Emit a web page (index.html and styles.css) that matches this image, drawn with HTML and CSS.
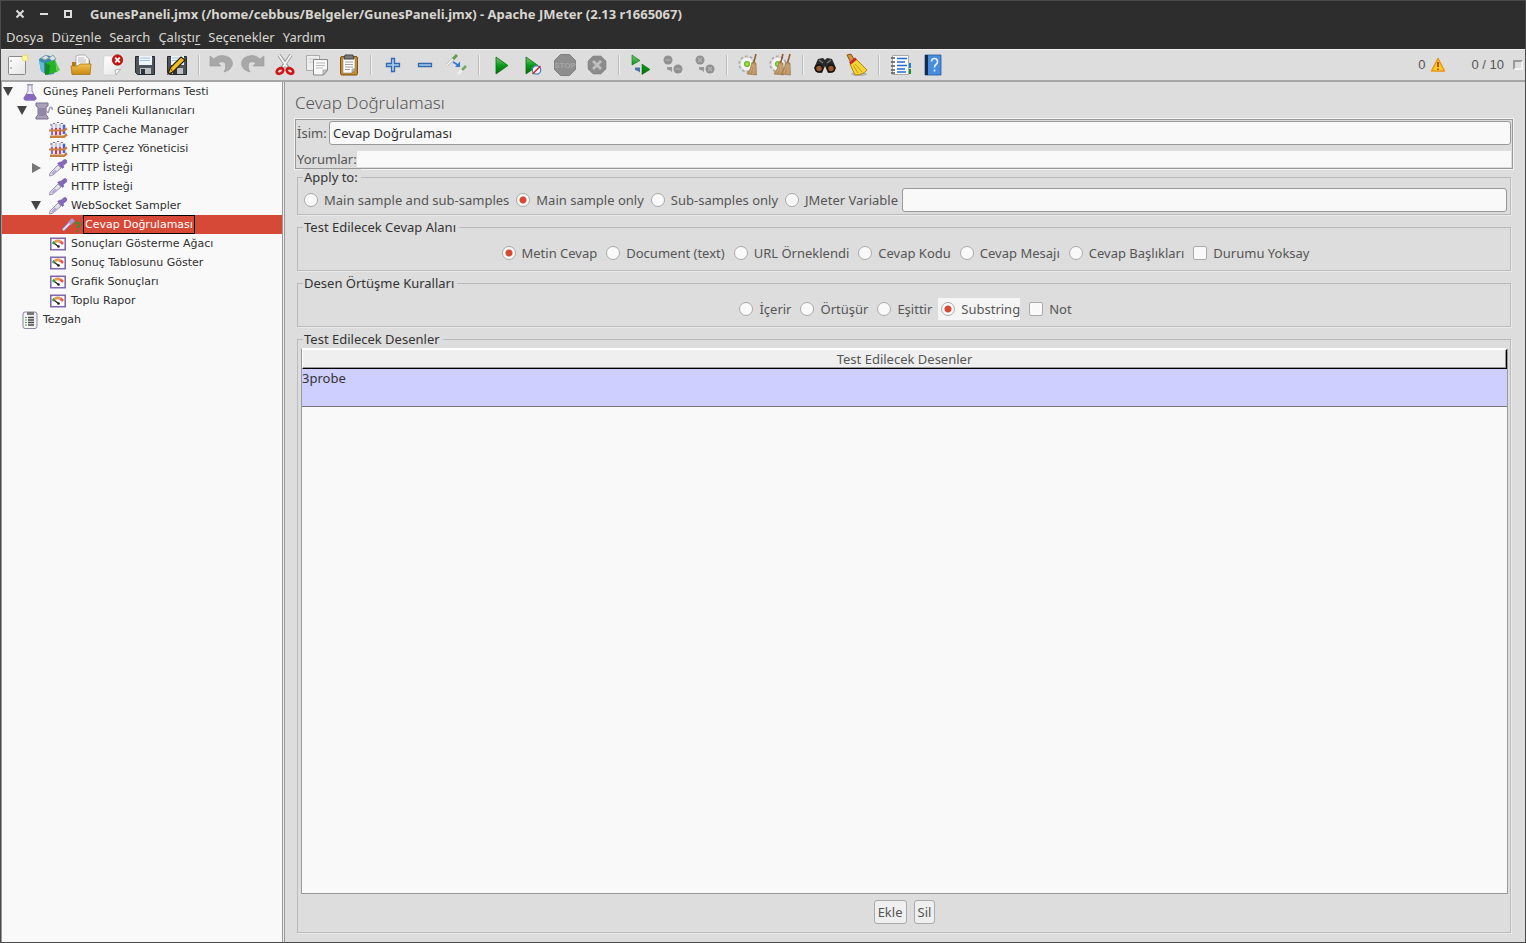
FILE: index.html
```html
<!DOCTYPE html>
<html lang="tr">
<head>
<meta charset="utf-8">
<title>GunesPaneli.jmx - Apache JMeter</title>
<link rel="stylesheet" href="styles.css">
</head>
<body>
<svg class="defs" aria-hidden="true">
  <defs>
    <linearGradient id="green" x1="0" y1="0" x2="0" y2="1"><stop offset="0" stop-color="#7cc47c"/><stop offset=".5" stop-color="#0a9a1a"/><stop offset="1" stop-color="#046804"/></linearGradient>
    <linearGradient id="gold" x1="0" y1="0" x2="0" y2="1"><stop offset="0" stop-color="#f0c050"/><stop offset="1" stop-color="#c88a10"/></linearGradient>
    <linearGradient id="paper" x1="0" y1="0" x2="1" y2="1"><stop offset="0" stop-color="#fff"/><stop offset="1" stop-color="#e4e4e4"/></linearGradient>
    <radialGradient id="glow"><stop offset="0" stop-color="#b8f060"/><stop offset="1" stop-color="#5cae1c"/></radialGradient>
  </defs>
  <symbol id="i-vial" viewBox="0 0 20 18">
    <path d="M1.500 17l.5-3 8-8 3 3-8 7z" fill="#e4e2ec" stroke="#9a96b0"/>
    <path d="M3 14.500l4-4 2 1.500-4 3.500z" fill="#b9a5dc"/>
    <path d="M9.500 4.500l5 5 1.500-1.500-1-1.500L18.500 4q1-3-1-3.500-2-.5-4 2.500l-2 .3z" fill="#8468ba" stroke="#6f55a5" stroke-width=".6"/>
  </symbol>
  <symbol id="i-rack" viewBox="0 0 20 18">
    <path d="M4 3v11M8 2.500v12M12 2.500v12M16 3v10" stroke="#c9c6d6" stroke-width="2.600"/>
    <path d="M4 7v7" stroke="#8a6cc0" stroke-width="2"/><path d="M8 7v7" stroke="#d2344a" stroke-width="2"/><path d="M12 7v7" stroke="#d03c78" stroke-width="2"/><path d="M16 4v9" stroke="#4562dc" stroke-width="2.400"/>
    <path d="M5 2.500h2M9 1.500h2M13 2.500h2M2 4h2" stroke="#777390" stroke-width="1.200"/>
    <path d="M1 9.500h15l3-2" fill="none" stroke="#c7803e" stroke-width="2.200"/><path d="M2 15.800h14l3-2.500" fill="none" stroke="#c7803e" stroke-width="2.600"/>
  </symbol>
  <symbol id="i-chart" viewBox="0 0 20 18">
    <rect x="2.800" y="3.300" width="14.400" height="11.400" fill="#fff" stroke="#8069ad" stroke-width="1.600"/>
    <path d="M5 9l1.500-2.500" stroke="#38a048" stroke-width="2.500"/><path d="M7 6.800q3-1.800 5.500 0" fill="none" stroke="#e89850" stroke-width="2.800"/><path d="M12.500 6.500l2.500 2.500" stroke="#e45a50" stroke-width="2.600"/>
    <path d="M6.500 8.500l4 3" stroke="#222" stroke-width="1.300"/><circle cx="10.500" cy="11.500" r="1.300" fill="#222"/>
  </symbol>
  <symbol id="i-run" viewBox="0 0 24 24"><path d="M7 4l12 8.500L7 21z" fill="url(#green)" stroke="#087010" stroke-width=".8"/></symbol>
  <symbol id="i-broom" viewBox="0 0 10 24"><path d="M9 1L6 12" stroke="#93602d" stroke-width="1.600"/><path d="M5 9l4 1 .5 12L0 21q4-5 5-12z" fill="#b68d5e" stroke="#94703f" stroke-width=".6"/><path d="M6 11l-3 9M7 11l-1 10M8 12v9" stroke="#dcb98c" stroke-width=".6"/></symbol>
  <symbol id="i-gear" viewBox="0 0 18 18"><circle cx="9" cy="9" r="7.300" fill="none" stroke="#a8a8a8" stroke-width="2.600" stroke-dasharray="2.600 2"/><circle cx="9" cy="9" r="6.800" fill="#f4f4f4" stroke="#d0d0d0" stroke-width=".8"/><circle cx="9" cy="9" r="3" fill="url(#glow)"/></symbol>
  <symbol id="i-disk" viewBox="0 0 24 24"><path d="M2.500 3.500h19v18h-17l-2-2z" fill="#4e545c" stroke="#25282d"/><path d="M6 3h13v9H6z" fill="#edf4fa"/><path d="M7 5h10M7 7.500h10" stroke="#a6c2dc"/><path d="M7 15h11v6H7z" fill="#bcc0c3"/><path d="M8 16h4v5H8z" fill="#30343a"/></symbol>
</svg>
<div class="window">
  <header class="titlebar">
    <div class="window-controls">
      <button type="button" aria-label="Kapat"><svg viewBox="0 0 10 10"><path d="M1.500 1.500l7 7M8.500 1.500l-7 7"/></svg></button>
      <button type="button" aria-label="Küçült"><svg viewBox="0 0 10 10"><path d="M1 5h8"/></svg></button>
      <button type="button" aria-label="Büyüt"><svg viewBox="0 0 10 10"><path d="M2 2h6v6H2z"/></svg></button>
    </div>
    <h1>GunesPaneli.jmx (/home/cebbus/Belgeler/GunesPaneli.jmx) - Apache JMeter (2.13 r1665067)</h1>
  </header>
  <nav class="menubar">
    <button type="button">Dosya</button><button type="button">Düz<u>e</u>nle</button><button type="button">Search</button><button type="button">Çalıştı<u>r</u></button><button type="button">Seçenekler</button><button type="button">Yardım</button>
  </nav>
  <div class="toolbar">
    <button type="button" aria-label="Yeni"><svg viewBox="0 0 24 24"><rect x="3.500" y="3.500" width="17" height="18" rx="1" fill="url(#paper)" stroke="#8a8a8a"/><path d="M6 7v2M6 14v2" stroke="#888"/><circle cx="20" cy="5" r="3" fill="#fff6a0" stroke="#eedc60"/></svg></button>
    <button type="button" aria-label="Şablonlar"><svg viewBox="0 0 24 24"><path d="M2 6l7-4 8 2 2 6-2 11-7 1-6-4z" fill="#3687b6"/><path d="M4 5l5-3 3 3-4 2zM12 5l4-3 3 4-4 2z" fill="#d8e2e4" stroke="#8aa0a8"/><path d="M8 10l10-3 2 12-12 3z" fill="#25b428"/><path d="M8 10l5 2-1 9-4 1z" fill="#168a1c"/><path d="M18 7l5 10-3 2z" fill="#5ecf4c"/><path d="M2 8l5 2v10l-3-2z" fill="#62b9df"/></svg></button>
    <button type="button" aria-label="Aç"><svg viewBox="0 0 24 24"><path d="M3 9h5l2-2h11v14H3z" fill="#b17a18"/><path d="M7 13V3l3-1h6l4 4v8z" fill="#f8f8f8" stroke="#999" stroke-width=".7"/><path d="M9 5h6M9 7h8M9 9h8" stroke="#bbb"/><path d="M2 13h7l2-2h11l-1 10.500H3z" fill="url(#gold)" stroke="#ac7410" stroke-width=".8"/></svg></button>
    <button type="button" aria-label="Kapat"><svg viewBox="0 0 24 24"><path d="M3 3h17v14l-5 5H2z" fill="url(#paper)" stroke="#ccc" stroke-width=".6"/><path d="M19.500 16L14 17l1 5z" fill="#fff" stroke="#999" stroke-width=".7"/><circle cx="16.500" cy="7" r="5.200" fill="#c9170f" stroke="#91100c" stroke-width=".7"/><path d="M14.200 4.700l4.600 4.600M18.800 4.700l-4.600 4.600" stroke="#fff" stroke-width="1.800"/></svg></button>
    <button type="button" aria-label="Kaydet"><svg viewBox="0 0 24 24"><use href="#i-disk"/></svg></button>
    <button type="button" aria-label="Farklı kaydet"><svg viewBox="0 0 24 24"><use href="#i-disk"/><path d="M3 21l2-6L16 4l4 3L8 19z" fill="#f4bd20" stroke="#2e2410" stroke-width="1.300"/><path d="M5 15l3 4" stroke="#5c3d0c"/></svg></button>
    <span class="separator"></span>
    <button type="button" aria-label="Geri al"><svg viewBox="0 0 24 24"><path id="undo" d="M1 3v10h11L9 10q6-3 7.500 1 1 4-1.500 8 8-2 8.500-8.500Q23 3 13 2.500 8 2.500 5 6z" fill="#a8a8a8" stroke="#989898" stroke-width=".6"/></svg></button>
    <button type="button" aria-label="Yinele"><svg viewBox="0 0 24 24"><use href="#undo" transform="matrix(-1 0 0 1 24 0)"/></svg></button>
    <button type="button" aria-label="Kes"><svg viewBox="0 0 24 24"><path d="M6 2l9 13M18 2L9 15" stroke="#8c8c8c" stroke-width="3.400"/><path d="M6 2l8 12M18 2l-8 12" stroke="#f4f4f4" stroke-width="2"/><ellipse cx="7" cy="18" rx="3.500" ry="2.500" fill="none" stroke="#cf1515" stroke-width="2.700" transform="rotate(-30 7 18)"/><ellipse cx="17" cy="18" rx="3.500" ry="2.500" fill="none" stroke="#cf1515" stroke-width="2.700" transform="rotate(30 17 18)"/></svg></button>
    <button type="button" aria-label="Kopyala"><svg viewBox="0 0 24 24"><path d="M1.500 2.500h13v15h-13z" fill="#eee" stroke="#aaa"/><path d="M4 6h8M4 9h8" stroke="#ccc"/><path d="M8.500 6.500h14v11l-4 4.500h-10z" fill="#f8f8f8" stroke="#888"/><path d="M11 10h9M11 12.500h9M11 15h7" stroke="#bbb"/><path d="M22 17h-4v5z" fill="#ccc" stroke="#888" stroke-width=".6"/></svg></button>
    <button type="button" aria-label="Yapıştır"><svg viewBox="0 0 24 24"><rect x="3.500" y="3.500" width="17" height="18.500" rx="1.500" fill="#c68a2c" stroke="#7d5010"/><path d="M6 5h12v12l-3 3H6z" fill="#fbfbfb" stroke="#888" stroke-width=".6"/><path d="M8 2h8l1 4H7z" fill="#777a78" stroke="#444"/><path d="M8 9h8M8 11.500h8M8 14h8M8 16.500h5" stroke="#a3a3a3"/><path d="M18 16h-3v4z" fill="#ccc" stroke="#777" stroke-width=".6"/></svg></button>
    <span class="separator"></span>
    <button type="button" aria-label="Genişlet"><svg viewBox="0 0 24 24"><path d="M10.500 5.500h3v5h5v3h-5v5h-3v-5h-5v-3h5z" fill="#a9cdf0" stroke="#3268b0" stroke-width="1.300"/></svg></button>
    <button type="button" aria-label="Daralt"><svg viewBox="0 0 24 24"><path d="M5.500 10.500h13v3h-13z" fill="#a9cdf0" stroke="#3268b0" stroke-width="1.300"/></svg></button>
    <button type="button" aria-label="Değiştir"><svg viewBox="0 0 24 24"><path d="M2 12l7-7" stroke="#bbb" stroke-width="3"/><path d="M2 12l7-7" stroke="#f5f5f5" stroke-width="1.500"/><path d="M8 6l4-4" stroke="#5e9e4c" stroke-width="3"/><path d="M13 21l5-5" stroke="#eee" stroke-width="3"/><path d="M17 17l4-4" stroke="#76a565" stroke-width="2.500"/><path d="M8 9l5 3" stroke="#3078d0" stroke-width="1.500"/><path d="M15 8.500v5.500H10z" fill="#3078d0"/></svg></button>
    <span class="separator"></span>
    <button type="button" aria-label="Başlat"><svg viewBox="0 0 24 24"><use href="#i-run"/></svg></button>
    <button type="button" aria-label="Beklemeden başlat"><svg viewBox="0 0 24 24"><use href="#i-run" x="-2"/><circle cx="15.500" cy="17" r="4.200" fill="#f4f4ff" stroke="#5080c0" stroke-width="1.300"/><path d="M11.500 21l8-8" stroke="#d12222" stroke-width="1.500"/></svg></button>
    <button type="button" aria-label="Durdur" disabled><svg viewBox="0 0 24 24"><path d="M7.500 1.500h9l6 6v9l-6 6h-9l-6-6v-9z" fill="#8e8e8e" stroke="#7f7f7f"/><text x="12" y="15" class="stop-text">STOP</text></svg></button>
    <button type="button" aria-label="Kapat" disabled><svg viewBox="0 0 24 24"><path d="M8 3h8l5 5v8l-5 5H8l-5-5V8z" fill="#8b8b8b" stroke="#858585" stroke-width=".6"/><path d="M8 8l8 8M16 8l-8 8" stroke="#c0c0c0" stroke-width="2.800"/></svg></button>
    <span class="separator"></span>
    <button type="button" aria-label="Uzaktan başlat"><svg viewBox="0 0 24 24"><path d="M3 2l8 5.500L3 12zM13 11l8 5.500-8 5z" fill="url(#green)" stroke="#087010" stroke-width=".6"/><path d="M6 14.500h5v5l-2-1.500-3-1z" fill="#496fa8"/></svg></button>
    <button type="button" aria-label="Uzaktan durdur" disabled><svg viewBox="0 0 24 24"><circle cx="7" cy="7" r="4.500" fill="#919191"/><circle cx="17" cy="16" r="4.500" fill="#919191"/><path d="M4.500 7h5M14.500 16h5" stroke="#aaa" stroke-width="1.500"/><path d="M6 14h5v5l-2-1.500-3-1z" fill="#999"/></svg></button>
    <button type="button" aria-label="Uzaktan kapat" disabled><svg viewBox="0 0 24 24"><circle cx="7" cy="7" r="4.500" fill="#919191"/><circle cx="17" cy="16" r="4.500" fill="#919191"/><path d="M5 5l4 4M9 5L5 9M15 14l4 4M19 14l-4 4" stroke="#b4b4b4" stroke-width="1.300"/><path d="M6 14h5v5l-2-1.500-3-1z" fill="#999"/></svg></button>
    <span class="separator"></span>
    <button type="button" aria-label="Temizle"><svg viewBox="0 0 24 24"><use href="#i-gear" x="1" y="2" width="18" height="18"/><use href="#i-broom" x="9" y="0" width="12" height="24"/></svg></button>
    <button type="button" aria-label="Hepsini temizle"><svg viewBox="0 0 24 24"><use href="#i-gear" x="0" y="2" width="18" height="18"/><use href="#i-broom" x="4" y="0" width="12" height="24"/><use href="#i-broom" x="11" y="0" width="12" height="24"/></svg></button>
    <span class="separator"></span>
    <button type="button" aria-label="Ara"><svg viewBox="0 0 24 24"><path d="M5 6l5-1 2 2 2-2 5 1 4 9-2 4-6 1-3-7-3 7-6-1-2-4z" fill="#292929"/><path d="M6 7l4 3M18 7l-4 3" stroke="#777" stroke-width="1.500"/><circle cx="6" cy="15.500" r="3.500" fill="#9c5628" stroke="#111" stroke-width="1.500"/><circle cx="18" cy="15.500" r="3.500" fill="#9c5628" stroke="#111" stroke-width="1.500"/></svg></button>
    <button type="button" aria-label="Aramayı sıfırla"><svg viewBox="0 0 24 24"><ellipse cx="14" cy="21" rx="8" ry="2" fill="#b5b5b5"/><path d="M2 2l4-1 4 7-4 2z" fill="#d69236" stroke="#875615"/><path d="M5 11l6-5 11 11q-4 5-12 5z" fill="#f5d434" stroke="#af870f"/><path d="M8 12l5 8M10 11l7 8" stroke="#c99a15"/><path d="M5 10.500l6-5" stroke="#c72424" stroke-width="2.800"/></svg></button>
    <span class="separator"></span>
    <button type="button" aria-label="Fonksiyon yardımcısı"><svg viewBox="0 0 24 24"><path d="M19 10h3v5h-3z" fill="#197de0"/><path d="M19 16h3v5h-3z" fill="#179324"/><path d="M3.500 2.500h16v19h-16z" fill="#fdfdfd" stroke="#aaa"/><path d="M8 5.500h10M8 9h8M8 12.500h10M8 16h8M8 19h9" stroke="#236ad0" stroke-width="1.300"/><path d="M2 5h4M2 9h4M2 13h4M2 17h4M2 20h4" stroke="#555" stroke-width="1.300"/></svg></button>
    <button type="button" aria-label="Yardım"><svg viewBox="0 0 24 24"><path d="M4 2h16v20H4z" fill="#498cdd" stroke="#265b9b" stroke-width=".8"/><path d="M4 2h3v20H4z" fill="#182c49"/><path d="M10.500 8.500q0-3 3-3t3 3q0 2-1.500 3-1.500 1-1.500 3M13.500 16.500v2" fill="none" stroke="#e8f0ff" stroke-width="1.600"/></svg></button>
    <div class="status">
      <span>0</span>
      <svg class="warning" viewBox="0 0 16 16" aria-hidden="true"><path d="M8 1.500l6.500 12.500h-13z" fill="#ffcd25" stroke="#e79415" stroke-width="1.500" stroke-linejoin="round"/><path d="M8 5v5M8 11.500v1.500" stroke="#a9380c" stroke-width="1.600"/></svg>
      <span class="threads">0 / 10</span>
      <span class="indicator"></span>
    </div>
  </div>
  <div class="workspace">
    <aside class="tree">
      <div class="node"><span class="arrow open"></span><svg viewBox="0 0 20 18"><path d="M8 2h4v6l4 7q0 2-2 2H6q-2 0-2-2l4-7z" fill="#eceaf4" stroke="#9690a8"/><path d="M6.500 11h7l3 4q0 2.500-2 2.500h-9q-2 0-2-2.500z" fill="#8868bc"/><path d="M7 1.500h6" stroke="#99a"/></svg><span class="label">Güneş Paneli Performans Testi</span></div>
      <div class="node level-1"><span class="arrow open"></span><svg viewBox="0 0 20 18"><path d="M2 1h12v3l-2 1v8l2 2v2H2v-2l2-2V5L2 4z" fill="#a9a0ba" stroke="#7a7190"/><path d="M5 7h6M5 9h6M5 11h6M5 13h6" stroke="#786d94"/><path d="M12 8q2 5 3 0 1-4 3-2l.5 2" fill="none" stroke="#a098b2" stroke-width="1.400"/></svg><span class="label">Güneş Paneli Kullanıcıları</span></div>
      <div class="node level-2"><span class="arrow"></span><svg><use href="#i-rack"/></svg><span class="label">HTTP Cache Manager</span></div>
      <div class="node level-2"><span class="arrow"></span><svg><use href="#i-rack"/></svg><span class="label">HTTP Çerez Yöneticisi</span></div>
      <div class="node level-2"><span class="arrow closed"></span><svg><use href="#i-vial"/></svg><span class="label">HTTP İsteği</span></div>
      <div class="node level-2"><span class="arrow"></span><svg><use href="#i-vial"/></svg><span class="label">HTTP İsteği</span></div>
      <div class="node level-2"><span class="arrow open"></span><svg><use href="#i-vial"/></svg><span class="label">WebSocket Sampler</span></div>
      <div class="node level-3 selected"><span class="arrow"></span><svg viewBox="0 0 20 18"><path d="M1 14l7-7" stroke="#8d78b5" stroke-width="3.600"/><path d="M1 14l7-7" stroke="#e6e0ef" stroke-width="1.800"/><path d="M7.500 7.500l4-4" stroke="#a99acb" stroke-width="4"/><path d="M13 8.500q.5-2 2.500-2t2 2-2 2.500v1.500M15.500 14v2" fill="none" stroke="#438c38" stroke-width="2"/></svg><span class="label">Cevap Doğrulaması</span></div>
      <div class="node level-2"><span class="arrow"></span><svg><use href="#i-chart"/></svg><span class="label">Sonuçları Gösterme Ağacı</span></div>
      <div class="node level-2"><span class="arrow"></span><svg><use href="#i-chart"/></svg><span class="label">Sonuç Tablosunu Göster</span></div>
      <div class="node level-2"><span class="arrow"></span><svg><use href="#i-chart"/></svg><span class="label">Grafik Sonuçları</span></div>
      <div class="node level-2"><span class="arrow"></span><svg><use href="#i-chart"/></svg><span class="label">Toplu Rapor</span></div>
      <div class="node"><span class="arrow"></span><svg viewBox="0 0 20 18"><rect x="3" y="1" width="14" height="16.500" rx="2" fill="#f4f4f4" stroke="#8d86a2"/><path d="M7 1h7v3H7z" fill="#777"/><path d="M8 6.500h6M8 9h6M8 11.500h6M8 14h6" stroke="#444" stroke-width="1.300"/><path d="M5 6.500h2M5 9h2M5 11.500h2M5 14h2" stroke="#5a9a5a"/></svg><span class="label">Tezgah</span></div>
    </aside>
    <div class="splitter"></div>
    <main class="editor">
      <h2>Cevap Doğrulaması</h2>
      <div class="naming">
        <div class="name-row"><label for="name">İsim:</label><input id="name" class="field" type="text" value="Cevap Doğrulaması"></div>
        <div class="comment-row"><label for="comments">Yorumlar:</label><input id="comments" type="text"></div>
      </div>
      <fieldset>
        <legend>Apply to:</legend>
        <div class="options scope">
          <label><input type="radio" name="scope">Main sample and sub-samples</label>
          <label><input type="radio" name="scope" checked>Main sample only</label>
          <label><input type="radio" name="scope">Sub-samples only</label>
          <label><input type="radio" name="scope">JMeter Variable</label>
          <input class="field" type="text" aria-label="JMeter Variable">
        </div>
      </fieldset>
      <fieldset>
        <legend>Test Edilecek Cevap Alanı</legend>
        <div class="options centered">
          <label><input type="radio" name="target" checked>Metin Cevap</label>
          <label><input type="radio" name="target">Document (text)</label>
          <label><input type="radio" name="target">URL Örneklendi</label>
          <label><input type="radio" name="target">Cevap Kodu</label>
          <label><input type="radio" name="target">Cevap Mesajı</label>
          <label><input type="radio" name="target">Cevap Başlıkları</label>
          <label><input type="checkbox">Durumu Yoksay</label>
        </div>
      </fieldset>
      <fieldset>
        <legend>Desen Örtüşme Kuralları</legend>
        <div class="options centered">
          <label><input type="radio" name="rule">İçerir</label>
          <label><input type="radio" name="rule">Örtüşür</label>
          <label><input type="radio" name="rule">Eşittir</label>
          <label class="hover"><input type="radio" name="rule" checked>Substring</label>
          <label><input type="checkbox">Not</label>
        </div>
      </fieldset>
      <fieldset class="patterns">
        <legend>Test Edilecek Desenler</legend>
        <div class="pattern-view">
          <table>
            <thead><tr><th>Test Edilecek Desenler</th></tr></thead>
            <tbody><tr><td>3probe</td></tr></tbody>
          </table>
        </div>
        <div class="actions"><button type="button">Ekle</button><button type="button">Sil</button></div>
      </fieldset>
    </main>
  </div>
</div>
</body>
</html>
```
FILE: styles.css
```css
* { box-sizing: border-box; }
body {
  margin: 0;
  font: 13px/16px "Noto Sans", "Open Sans", sans-serif;
  color: #555;
}
button, input { font: inherit; color: inherit; margin: 0; }
button { padding: 0; border: 0; background: none; }
.defs { position: absolute; width: 0; height: 0; }

.window {
  display: flex;
  flex-direction: column;
  height: 100vh;
  border: 1px solid #4a4a4a;
  border-top: 0;
  background: #ddd;
}
.titlebar {
  display: flex;
  align-items: center;
  height: 27px;
  padding-left: 14px;
  gap: 17px;
  border-top: 1px solid #4a4a4a;
  background: #2d2d2d;
  color: #d8d6d0;
}
.window-controls { display: flex; gap: 14px; }
.window-controls button { display: flex; }
.window-controls svg { width: 10px; height: 10px; fill: none; stroke: #dedede; stroke-width: 2; }
.titlebar h1 { margin: 0; font-size: 13px; font-weight: 700; white-space: nowrap; }
.menubar {
  display: flex;
  height: 22px;
  gap: 8px;
  padding: 0 0 2px 5px;
  background: #2d2d2d;
  color: #d8d6d0;
}
.menubar button { white-space: nowrap; }
.menubar u { text-underline-offset: 2px; }

.toolbar {
  display: flex;
  align-items: center;
  height: 33px;
  border-bottom: 2px solid #a6a6a6;
  border-top: 1px solid #f0f0f0;
}
.toolbar button { display: flex; justify-content: center; flex: none; width: 32px; }
.toolbar button svg { width: 24px; height: 24px; }
.separator { flex: none; width: 12px; height: 20px; background: linear-gradient(90deg, #bbb 50%, #f2f2f2 50%) center / 2px 100% no-repeat; }
.stop-text { font: bold 8px "Liberation Sans", sans-serif; fill: #a6a6a6; text-anchor: middle; }
.status {
  display: flex;
  align-items: center;
  margin-left: auto;
  padding-right: 2px;
  gap: 5px;
  font: 13px/16px "Liberation Sans", sans-serif;
}
.warning { width: 16px; height: 16px; }
.threads { margin-left: 20px; }
.indicator { flex: none; width: 10px; height: 10px; margin-left: 4px; border: 2px solid #999; border-right-color: #f4f4f4; border-bottom-color: #f4f4f4; }

.workspace { display: flex; flex: 1; min-height: 0; }
.tree {
  flex: none;
  width: 282px;
  border-left: 1px solid #999;
  border-right: 1px solid #999;
  background: #f9f9f9;
  font: 11px/17px "DejaVu Sans", sans-serif;
  color: #303030;
}
.node { display: flex; align-items: center; height: 19px; }
.level-1 { padding-left: 14px; }
.level-2 { padding-left: 28px; }
.level-3 { padding-left: 42px; }
.node svg { width: 20px; height: 18px; margin-left: 6px; }
.label { margin-left: 1px; padding: 0 1px; border: 1px solid transparent; white-space: nowrap; }
.arrow { display: flex; justify-content: center; width: 12px; }
.arrow.open::before { content: ""; border: 5px solid transparent; border-top: 9px solid #444; border-bottom: 0; }
.arrow.closed::before { content: ""; border: 5px solid transparent; border-left: 9px solid #777; border-right: 0; }
.selected { background: #d64937; color: #fff; }
.selected .label { border-color: #000; }
.splitter { flex: none; width: 2px; border-right: 1px solid #999; background: #eee; }

.editor {
  display: flex;
  flex: 1;
  flex-direction: column;
  min-width: 0;
  padding: 9px 12px 9px 10px;
}
.editor h2 { margin: 0 0 4px; font-size: 17px; line-height: 24px; font-weight: 300; }
.naming { border: 1px solid #999; outline: 1px solid #f5f5f5; padding: 1px; }
.name-row { display: flex; align-items: center; }
.name-row label { width: 32px; }
.field {
  flex: 1;
  min-width: 0;
  height: 24px;
  padding: 0 3px;
  border: 1px solid #999;
  border-radius: 3px;
  background: #f9f9f9;
  color: #333;
}
.comment-row { display: flex; margin-top: 6px; }
.comment-row input { flex: 1; min-width: 0; height: 16px; padding: 0; border: 0; background: #f9f9f9; }
fieldset {
  min-width: 0;
  margin: 0 2px 4px;
  padding: 0 3px;
  border: 1px solid #bbb;
  box-shadow: 1px 1px #eaeaea;
}
legend { margin-left: 2px; padding: 0 3px 0 1px; color: #333; background: #ddd; }
.options { display: flex; align-items: center; gap: 6px; height: 35px; }
.options label { display: flex; align-items: center; gap: 6px; height: 22px; padding-left: 3px; white-space: nowrap; }
.scope { gap: 4px; height: 29px; }
.centered { justify-content: center; }
.options .hover { background: #f5f5f5; }
input[type="radio"], input[type="checkbox"] {
  appearance: none;
  flex: none;
  width: 14px;
  height: 14px;
  border: 1px solid #aaa;
  border-radius: 2px;
  background: #f9f9f9;
}
input[type="radio"] { border-radius: 50%; }
input[type="radio"]:checked { background: radial-gradient(circle, #d64937 3px, #f9f9f9 4px); }
.patterns { display: flex; flex: 1; flex-direction: column; margin-bottom: 0; padding: 1px 2px 0 3px; }
.pattern-view { flex: 1; border: 1px solid #999; border-top-color: #fff; background: #f9f9f9; }
table { width: 100%; border-collapse: separate; border-spacing: 0; }
th {
  height: 20px;
  padding: 0;
  border: 1px solid #fff;
  border-right-color: #000;
  border-bottom-color: #000;
  box-shadow: inset -1px -1px #999;
  background: #efefef;
  font-weight: 400;
}
td { height: 38px; padding: 1px 0; border-bottom: 1px solid #777; background: #ceceff; color: #333; vertical-align: top; }
.actions { display: flex; justify-content: center; gap: 7px; padding: 6px 0 8px; }
.actions button { height: 24px; padding: 0 3px; border: 1px solid #aaa; border-radius: 3px; background: #efefef; }
```
